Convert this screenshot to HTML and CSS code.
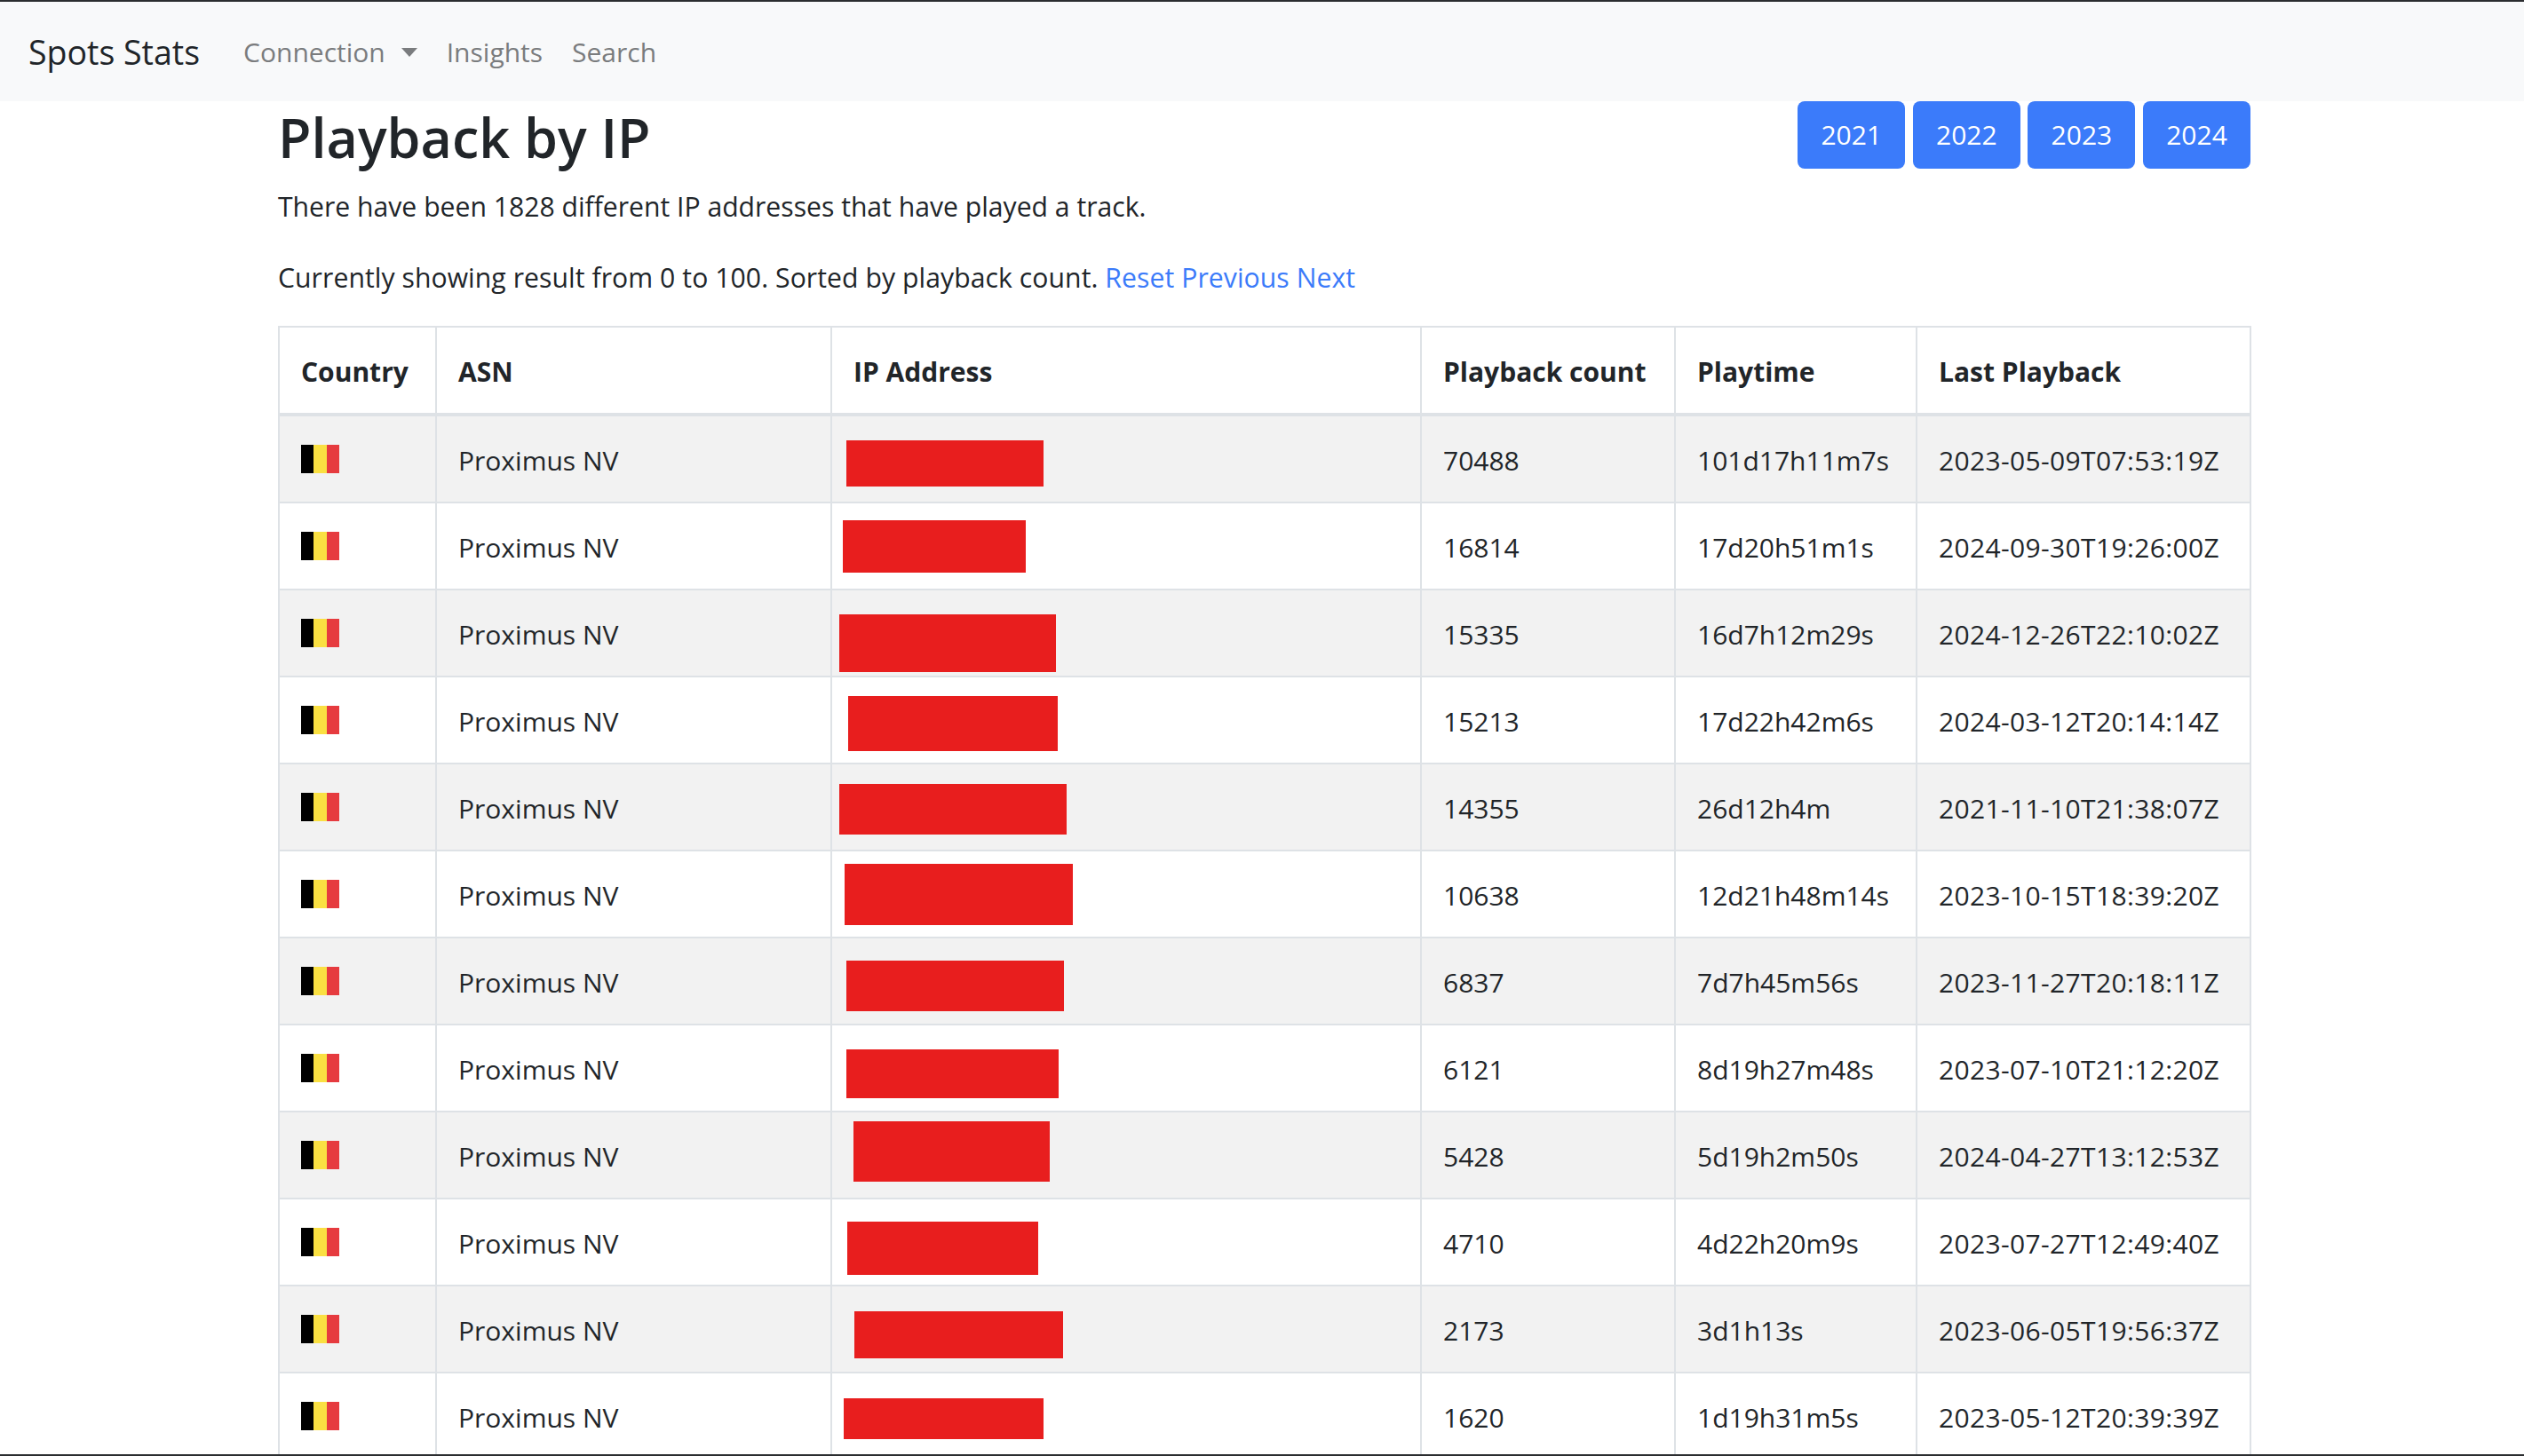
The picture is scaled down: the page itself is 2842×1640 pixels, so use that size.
FILE: index.html
```html
<!DOCTYPE html>
<html lang="en">
<head>
<meta charset="UTF-8">
<title>Spots Stats</title>
<link rel="stylesheet" href="styles.css">
</head>
<body>

<nav class="navbar">
  <a class="brand" href="#">Spots Stats</a>
  <a class="nav-link" href="#">Connection<span class="caret"></span></a>
  <a class="nav-link" href="#">Insights</a>
  <a class="nav-link" href="#">Search</a>
</nav>

<main class="container">
  <div class="title-row">
    <h2>Playback by IP</h2>
    <div class="years">
      <a class="btn" href="#">2021</a>
      <a class="btn" href="#">2022</a>
      <a class="btn" href="#">2023</a>
      <a class="btn" href="#">2024</a>
    </div>
  </div>
  <p>There have been 1828 different IP addresses that have played a track.</p>
  <p class="showing">Currently showing result from 0 to 100. Sorted by playback count. <a href="#">Reset</a> <a href="#">Previous</a> <a href="#">Next</a></p>

  <table>
    <colgroup>
      <col class="c-country"><col class="c-asn"><col class="c-ip"><col class="c-count"><col class="c-time"><col class="c-last">
    </colgroup>
    <thead>
      <tr><th>Country</th><th>ASN</th><th>IP Address</th><th>Playback count</th><th>Playtime</th><th>Last Playback</th></tr>
    </thead>
    <tbody>
      <tr><td><span class="flag"></span></td><td>Proximus NV</td><td class="ip"><span class="redact r1"></span></td><td>70488</td><td>101d17h11m7s</td><td class="date">2023-05-09T07:53:19Z</td></tr>
      <tr><td><span class="flag"></span></td><td>Proximus NV</td><td class="ip"><span class="redact r2"></span></td><td>16814</td><td>17d20h51m1s</td><td class="date">2024-09-30T19:26:00Z</td></tr>
      <tr><td><span class="flag"></span></td><td>Proximus NV</td><td class="ip"><span class="redact r3"></span></td><td>15335</td><td>16d7h12m29s</td><td class="date">2024-12-26T22:10:02Z</td></tr>
      <tr><td><span class="flag"></span></td><td>Proximus NV</td><td class="ip"><span class="redact r4"></span></td><td>15213</td><td>17d22h42m6s</td><td class="date">2024-03-12T20:14:14Z</td></tr>
      <tr><td><span class="flag"></span></td><td>Proximus NV</td><td class="ip"><span class="redact r5"></span></td><td>14355</td><td>26d12h4m</td><td class="date">2021-11-10T21:38:07Z</td></tr>
      <tr><td><span class="flag"></span></td><td>Proximus NV</td><td class="ip"><span class="redact r6"></span></td><td>10638</td><td>12d21h48m14s</td><td class="date">2023-10-15T18:39:20Z</td></tr>
      <tr><td><span class="flag"></span></td><td>Proximus NV</td><td class="ip"><span class="redact r7"></span></td><td>6837</td><td>7d7h45m56s</td><td class="date">2023-11-27T20:18:11Z</td></tr>
      <tr><td><span class="flag"></span></td><td>Proximus NV</td><td class="ip"><span class="redact r8"></span></td><td>6121</td><td>8d19h27m48s</td><td class="date">2023-07-10T21:12:20Z</td></tr>
      <tr><td><span class="flag"></span></td><td>Proximus NV</td><td class="ip"><span class="redact r9"></span></td><td>5428</td><td>5d19h2m50s</td><td class="date">2024-04-27T13:12:53Z</td></tr>
      <tr><td><span class="flag"></span></td><td>Proximus NV</td><td class="ip"><span class="redact r10"></span></td><td>4710</td><td>4d22h20m9s</td><td class="date">2023-07-27T12:49:40Z</td></tr>
      <tr><td><span class="flag"></span></td><td>Proximus NV</td><td class="ip"><span class="redact r11"></span></td><td>2173</td><td>3d1h13s</td><td class="date">2023-06-05T19:56:37Z</td></tr>
      <tr><td><span class="flag"></span></td><td>Proximus NV</td><td class="ip"><span class="redact r12"></span></td><td>1620</td><td>1d19h31m5s</td><td class="date">2023-05-12T20:39:39Z</td></tr>
    </tbody>
  </table>
</main>

<div class="window-edge"></div>

</body>
</html>
```

FILE: styles.css
```css
html{height:100%;overflow:hidden;}
body{margin:0;height:100%;overflow:hidden;font-family:"Open Sans","Noto Sans",sans-serif;font-size:30px;line-height:48px;color:#212529;background:#fff;border-top:2px solid #2b2d30;box-sizing:border-box;}
a{color:#3b7bfa;text-decoration:none;}

/* Navbar */
.navbar{display:flex;align-items:center;height:112px;padding:2px 32px 0;box-sizing:border-box;background:#f8f9fa;}
.brand{font-size:37.5px;color:#212529;margin-right:49px;}
.nav-link{color:#7a7c7e;margin-right:33px;display:flex;align-items:center;}
.caret{width:0;height:0;margin-left:18px;border-top:10px solid #7a7c7e;border-left:9px solid transparent;border-right:9px solid transparent;}

/* Page */
.container{width:2221px;margin-left:313px;}
.title-row{display:flex;justify-content:space-between;align-items:flex-start;}
h2{margin:2px 0 14px;font-size:61px;font-weight:600;line-height:77px;}
.years{display:flex;gap:8.6px;}
.btn{display:block;width:121px;height:76px;padding-top:2px;box-sizing:border-box;line-height:72px;text-align:center;background:#3b7bfa;color:#fff;border-radius:8px;}
p{margin:0 0 30px;padding-top:2px;font-size:30.15px;}
.showing{letter-spacing:.07px;}

/* Table */
table{width:2220px;table-layout:fixed;border-collapse:collapse;}
.c-country{width:177px;}
.c-asn{width:445px;}
.c-ip{width:664px;}
.c-count{width:286px;}
.c-time{width:272px;}
.c-last{width:376px;}
th,td{padding:26px 24px 22px;border:2px solid #dee2e6;text-align:left;white-space:nowrap;}
th{font-weight:700;border-bottom-width:4px;}
tbody tr:nth-child(odd){background:#f2f2f2;}
.date{letter-spacing:.35px;}
.flag{display:block;width:43px;height:32px;margin-bottom:4px;background:linear-gradient(90deg,#000 33.3%,#fae042 33.3%,#fae042 66.6%,#e63b3f 66.6%);}
.ip{position:relative;}
.redact{position:absolute;background:#e81e1e;}
.r1{left:16px;top:27px;width:222px;height:52px;}
.r2{left:12px;top:19px;width:206px;height:59px;}
.r3{left:8px;top:27px;width:244px;height:65px;}
.r4{left:18px;top:21px;width:236px;height:62px;}
.r5{left:8px;top:22px;width:256px;height:57px;}
.r6{left:14px;top:14px;width:257px;height:69px;}
.r7{left:16px;top:25px;width:245px;height:57px;}
.r8{left:16px;top:27px;width:239px;height:55px;}
.r9{left:24px;top:10px;width:221px;height:68px;}
.r10{left:17px;top:25px;width:215px;height:60px;}
.r11{left:25px;top:28px;width:235px;height:53px;}
.r12{left:13px;top:28px;width:225px;height:46px;}

/* bottom edge of the captured window */
.window-edge{position:fixed;left:0;right:0;bottom:0;height:2px;background:#2b2d30;}
```
